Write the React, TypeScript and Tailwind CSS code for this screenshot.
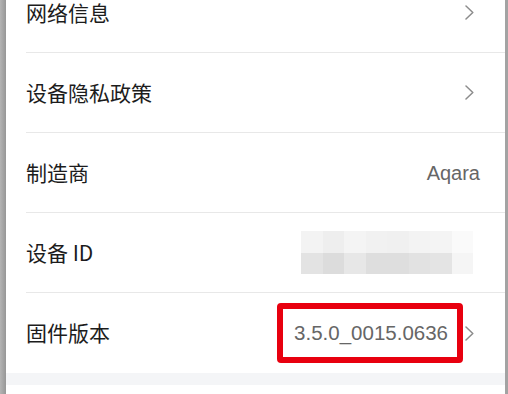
import React from 'react';

const blurTop = ['#f3f3f3', '#eeeeee', '#f4f4f4', '#f1f1f1', '#f0f0f0', '#f3f3f3', '#f4f4f4', '#fafafa'];
const blurBottom = ['#e3e3e3', '#dcdcdc', '#e7e7e7', '#dedede', '#dedede', '#e2e2e2', '#e4e4e4', '#f5f5f5'];

function Chevron({ className = '' }: { className?: string }) {
  return (
    <svg width="9" height="15" viewBox="0 0 9 15" className={className}>
      <polyline points="1,1 7.8,7.5 1,14" fill="none" stroke="#8c8c8c" strokeWidth="1.5" strokeLinecap="round" strokeLinejoin="round" />
    </svg>
  );
}

function Row({ label, children, last }: { label: string; children?: React.ReactNode; last?: boolean }) {
  return (
    <div
      className={`ml-[20px] flex h-[80px] shrink-0 items-center justify-between pr-[25px] ${
        last ? '' : 'border-b border-[#e8e8e8]'
      }`}
    >
      <span
        className="text-[21px] text-[#1c1c1c]"
        style={{ fontFamily: '"Noto Sans CJK SC", "Liberation Sans", sans-serif' }}
      >
        {label}
      </span>
      <div className="flex items-center">{children}</div>
    </div>
  );
}

export default function App() {
  return (
    <div
      className="flex h-[394px] w-[508px] overflow-hidden bg-white"
      style={{ fontFamily: '"Liberation Sans", "Noto Sans CJK SC", sans-serif' }}
    >
      <div className="w-[6px] shrink-0 bg-gradient-to-r from-[#b4b4b4] to-[#979797]" />
      <div className="flex flex-1 flex-col -mt-[27px]">
        <Row label="网络信息">
          <Chevron className="mr-[6px]" />
        </Row>
        <Row label="设备隐私政策">
          <Chevron className="mr-[6px]" />
        </Row>
        <Row label="制造商">
          <span className="text-[20px] text-[#666666]">Aqara</span>
        </Row>
        <Row label="设备 ID">
          <div className="mr-[7px] grid h-[43px] w-[172px] grid-cols-8">
            {blurTop.map((c, i) => (
              <div key={'t' + i} style={{ backgroundColor: c }} />
            ))}
            {blurBottom.map((c, i) => (
              <div key={'b' + i} style={{ backgroundColor: c }} />
            ))}
          </div>
        </Row>
        <Row label="固件版本" last>
          <div className="flex h-[60px] items-center rounded-[4px] border-[6px] border-[#e8000f] pl-[11px] pr-[9px]">
            <span className="text-[20.5px] text-[#666666]">3.5.0_0015.0636</span>
          </div>
          <Chevron className="ml-[2px] mr-[6px]" />
        </Row>
        <div className="h-[12px] shrink-0 bg-[#f4f5f7]" />
        <div className="flex-1 bg-white" />
      </div>
      <div className="w-[3px] shrink-0 bg-[#a3a3a3]" />
    </div>
  );
}
